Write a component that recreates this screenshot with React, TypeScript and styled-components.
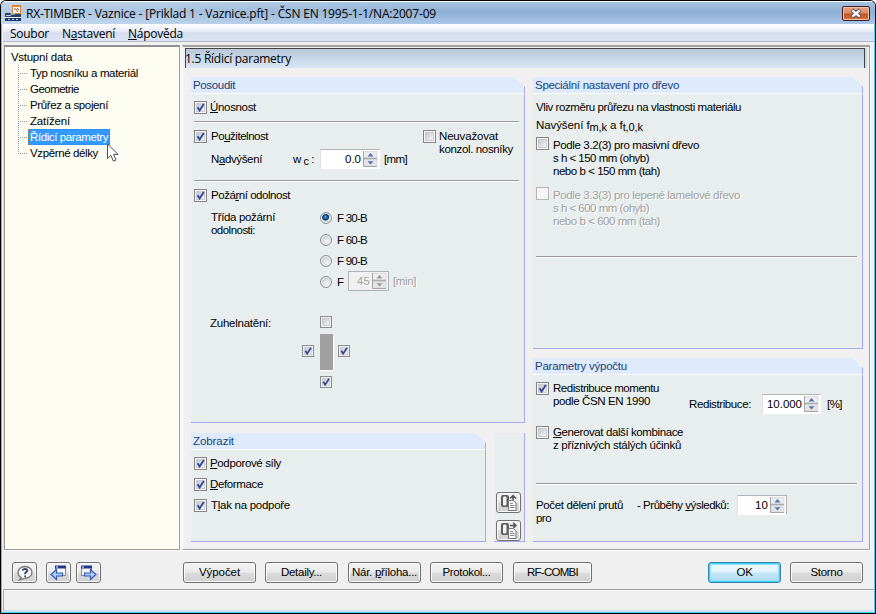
import React, { useLayoutEffect, useRef, useState } from "react";
import styled, { createGlobalStyle, css } from "styled-components";

const GlobalStyle = createGlobalStyle`
  *, *::before, *::after { box-sizing: border-box; }
  body { margin: 0; background: #fff; overflow: hidden; }
  u { text-decoration: underline; text-underline-offset: 1px; text-decoration-thickness: 1px; }
`;

/* ---------- Text ---------- */

const TextRun = styled.span<{ $muted?: boolean; $font: "dialog" | "caption" | "header" }>`
  display: block;
  width: max-content;
  white-space: pre;
  height: 13px;
  color: #000;
  ${({ $font }) =>
    $font === "dialog"
      ? css`font: 11.5px/13px "Liberation Sans", Arial, sans-serif;`
      : $font === "header"
      ? css`font: 11.5px/13px "Liberation Sans", Arial, sans-serif; color: #17427c;`
      : css`font: 12px/13px "Open Sans", "Noto Sans", sans-serif;`}
  ${({ $muted }) => $muted && css`color: #a0a0a0; text-shadow: 1px 1px 0 #fff;`}
`;

type TextProps = {
  w: number;
  children: React.ReactNode;
  muted?: boolean;
  font?: "dialog" | "caption" | "header";
};

/** A single line of text whose tracking is adjusted to fill the given width. */
function Text({ w, children, muted, font = "dialog" }: TextProps) {
  const ref = useRef<HTMLSpanElement>(null);
  const [tracking, setTracking] = useState(0);
  useLayoutEffect(() => {
    const el = ref.current;
    if (!el) return;
    el.style.letterSpacing = "0px";
    const count = (el.textContent || "").length;
    setTracking((w + 1 - el.getBoundingClientRect().width) / count);
    el.style.letterSpacing = "";
  }, [w]);
  return (
    <TextRun ref={ref} $muted={muted} $font={font} style={{ letterSpacing: `${tracking}px` }}>
      {children}
    </TextRun>
  );
}

/* ---------- Window frame ---------- */

const Window = styled.div`
  width: 876px;
  height: 614px;
  display: flex;
  flex-direction: column;
  background: #f0f0f0;
  border: 1px solid #000;
  border-right-color: #101418;
  border-radius: 6px 6px 0 0;
  overflow: hidden;
  box-shadow: inset 0 0 0 1px #3fd2f5;
  padding: 0 1px 1px 2px;
`;

const TitleBar = styled.header`
  height: 23px;
  margin: 0 -1px 0 -2px;
  padding: 1px 5px 0 4px;
  display: flex;
  align-items: center;
  border-top: 1px solid #fff;
  background: linear-gradient(to right, rgba(255,255,255,.35), rgba(255,255,255,0) 50%),
    linear-gradient(#a5c2e0, #8fb0d5 45%, #a9c6e6);
`;

const AppIcon = styled.svg`
  width: 17px;
  height: 17px;
  margin-right: 4px;
  flex: none;
`;

const CloseButton = styled.button`
  width: 28px;
  height: 15px;
  margin: 0 0 0 auto;
  padding: 0;
  border: 1px solid #43192d;
  border-radius: 2px;
  box-shadow: inset 0 0 0 1px #f1c3ac;
  background: linear-gradient(#e6a483, #dc8a62 48%, #c35218 52%, #d6753e);
  display: grid;
  place-items: center;
`;

const MenuBar = styled.nav`
  height: 18px;
  display: flex;
  padding: 3px 0 0 7px;
  border-bottom: 1px solid #b5bacb;
  background: linear-gradient(#fff, #e9edf8 40%, #d7def0 55%, #dce3f4);
`;

const MenuItem = styled.div<{ $gap: number }>`
  margin-right: ${({ $gap }) => $gap}px;
`;

const Workspace = styled.main`
  display: flex;
  height: 508px;
  padding-top: 3px;
  background: #f0f0f0;
  border-left: 1px solid #d5def0;
`;

/* ---------- Navigation tree ---------- */

const Tree = styled.aside`
  width: 176px;
  height: 505px;
  margin-right: 2px;
  padding: 4px 0 0 1px;
  background: #fdfdf3;
  border: 1px solid #999;
  border-top: 2px solid #909090;
  box-shadow: 0 1px 0 #fff, 1px 0 0 #fff;
`;

const TreeRoot = styled.div`
  height: 16px;
  padding-left: 5px;
`;

const TreeRow = styled.div`
  height: 16px;
  display: flex;
  padding-left: 12px;
`;

const Branch = styled.span<{ $last?: boolean }>`
  width: 9px;
  height: 16px;
  margin: -2px 2px 0 0;
  background:
    repeating-linear-gradient(to bottom, #999 0 1px, transparent 1px 2px) 0 0 / 1px ${({ $last }) => ($last ? "8px" : "16px")} no-repeat,
    repeating-linear-gradient(to right, #999 0 1px, transparent 1px 2px) 0 8px / 9px 1px no-repeat;
`;

const TreeLabel = styled.div<{ $selected?: boolean }>`
  position: relative;
  height: 16px;
  padding: 1px 1px 0 1px;
  border: 1px solid transparent;
  margin: -2px 0 0 -1px;
  ${({ $selected }) =>
    $selected &&
    css`
      background: #3399ff;
      border: 1px dotted #c46a15;
      span { color: #fff; }
    `}
`;

const Cursor = styled.svg`
  position: absolute;
  left: 77px;
  top: 13px;
  width: 14px;
  height: 20px;
`;

/* ---------- Content panels ---------- */

const Content = styled.section`
  width: 688px;
  height: 505px;
  padding: 1px 0 0 1px;
  border-top: 2px solid #a0a0a0;
  border-right: 1px solid #a0a0a0;
  border-bottom: 1px solid #a0a0a0;
  border-left: 1px solid #fff;
  box-shadow: 0 1px 0 #fff, 1px 0 0 #fff;
`;

const PageTitle = styled.div`
  height: 20px;
  width: 680px;
  margin-left: 1px;
  padding-top: 3px;
  border: 1px solid #444;
  border-bottom: 0;
  background: linear-gradient(#b9c9da, #c6d5e5 45%, #d9e6f4);
  box-shadow: 2px 0 0 #c9d8e8;
`;

const TitleText = styled.div`
  margin-left: -1px;
`;

const Panels = styled.div`
  display: grid;
  grid-template-columns: 334px 330px;
  column-gap: 8px;
  padding: 9px 0 0 7px;
`;

const Column = styled.div`
  display: flex;
  flex-direction: column;
`;

const GroupBox = styled.section<{ $h: number; $w: number }>`
  width: ${({ $w }) => $w}px;
  height: ${({ $h }) => $h}px;
  display: flex;
  flex-direction: column;
`;

const GroupHeader = styled.div`
  height: 17px;
  flex: none;
  padding: 2px 0 0 2px;
  background: #dfeafc;
  border-bottom: 1px solid #fff;
  border-right: 1px solid #a8a8ec;
  clip-path: polygon(0 0, calc(100% - 11px) 0, 100% 10px, 100% 100%, 0 100%);
`;

const GroupBody = styled.div`
  flex: 1;
  background: #e8eeee;
  border-right: 1px solid #a8a8ec;
  border-bottom: 1px solid #a8a8ec;
  padding: 7px 5px 0 3px;
`;

function Group({ title, titleWidth, w, h, children }: { title: string; titleWidth: number; w: number; h: number; children: React.ReactNode }) {
  return (
    <GroupBox $w={w} $h={h}>
      <GroupHeader>
        <Text font="header" w={titleWidth}>{title}</Text>
      </GroupHeader>
      <GroupBody>{children}</GroupBody>
    </GroupBox>
  );
}

const Separator = styled.hr<{ $top: number }>`
  margin: ${({ $top }) => $top}px 0 0 0;
  height: 2px;
  border: 0;
  border-top: 1px solid #9a9a9a;
  border-bottom: 1px solid #fff;
`;

const Row = styled.div<{ $top?: number; $left?: number; $h?: number }>`
  display: flex;
  height: ${({ $h = 13 }) => $h}px;
  margin-top: ${({ $top = 0 }) => $top}px;
  margin-left: ${({ $left = 0 }) => $left}px;
`;

const Cell = styled.div<{ $w?: number; $top?: number }>`
  flex: none;
  width: ${({ $w }) => ($w ? `${$w}px` : "auto")};
  padding-top: ${({ $top = 0 }) => $top}px;
`;

const Lines = styled.div<{ $top?: number }>`
  display: flex;
  flex-direction: column;
  align-items: flex-start;
  padding-top: ${({ $top = 0 }) => $top}px;
`;

/* ---------- Controls ---------- */

const Box = styled.svg<{ $small?: boolean; $gap?: number }>`
  flex: none;
  display: block;
  width: ${({ $small }) => ($small ? 12 : 13)}px;
  height: ${({ $small }) => ($small ? 12 : 13)}px;
  margin-right: ${({ $gap = 3 }) => $gap}px;
`;

function Check({ on, small, disabled, gap }: { on?: boolean; small?: boolean; disabled?: boolean; gap?: number }) {
  return (
    <Box viewBox="0 0 13 13" $small={small} $gap={gap}>
      <defs>
        <linearGradient id="well" x1="0" y1="0" x2="1" y2="1">
          <stop offset="0" stopColor="#bfc4ca" />
          <stop offset="1" stopColor="#f8f8f8" />
        </linearGradient>
      </defs>
      <rect x=".5" y=".5" width="12" height="12" fill="#f5f5f5" stroke={disabled ? "#b5b5b5" : "#868686"} />
      {!disabled && <rect x="2.5" y="2.5" width="8" height="8" fill="url(#well)" stroke="#c9ced3" />}
      {on && <path d="M3.6 6.2 5.6 9.4 9.8 3" fill="none" stroke="#32479a" strokeWidth="1.9" />}
    </Box>
  );
}

const RadioDot = styled.span<{ $on?: boolean }>`
  flex: none;
  width: 12px;
  height: 12px;
  margin-right: 5px;
  border: 1px solid #8b8f92;
  border-radius: 50%;
  box-shadow: inset 0 0 0 1px #f6f6f6;
  background: ${({ $on }) =>
    $on
      ? "radial-gradient(circle at 45% 40%, #48b4ee 0, #1767a8 1.6px, #0e2f5b 3px, #d5dade 4px)"
      : "radial-gradient(circle at 60% 65%, #f7f7f7, #cfd2d4 5px)"};
`;

const SpinFrame = styled.div<{ $w: number; $disabled?: boolean; $framed?: boolean }>`
  flex: none;
  display: flex;
  justify-content: flex-end;
  width: ${({ $w }) => $w}px;
  height: 20px;
  padding: 0 1px 0 0;
  background: ${({ $disabled }) => ($disabled ? "#f0f0f0" : "#fff")};
  border: 1px solid ${({ $disabled }) => ($disabled ? "#adb2b5" : "#fff")};
  border-top-color: ${({ $disabled }) => ($disabled ? "#adb2b5" : "#aeb4bb")};
  border-left-color: ${({ $disabled }) => ($disabled ? "#adb2b5" : "#dde2e6")};
  border-right-color: ${({ $framed, $disabled }) => ($framed || $disabled ? "#adb2b5" : "#fff")};
`;

const SpinValue = styled.div`
  padding-top: 3px;
`;

const SpinArrows = styled.svg`
  width: 15px;
  height: 16px;
  margin: 1px 0 0 2px;
  flex: none;
`;

function Spinner({ w, value, valueWidth, disabled, framed }: { w: number; value: string; valueWidth: number; disabled?: boolean; framed?: boolean }) {
  const arrow = disabled ? "#9a9a9a" : "#5272b6";
  return (
    <SpinFrame $w={w} $disabled={disabled} $framed={framed}>
      <SpinValue><Text w={valueWidth} muted={disabled}>{value}</Text></SpinValue>
      <SpinArrows viewBox="0 0 15 16">
        <rect x=".5" y=".5" width="13.5" height="6.5" fill="#ececec" stroke="#dedede" />
        <rect x=".5" y="8.5" width="13.5" height="6.5" fill="#e4e4e4" stroke="#dedede" />
        <path d="M.5 0v15.5H14" fill="none" stroke="#a5a5a5" />
        <path d="M1 7.5h13" stroke="#a8acb0" strokeWidth="1.4" />
        <path d="M4.5 5.4h6L7.5 2z" fill={arrow} />
        <path d="M4.5 10.2h6l-3 3.2z" fill={arrow} />
      </SpinArrows>
    </SpinFrame>
  );
}

const CharringGrid = styled.div`
  display: grid;
  grid-template-columns: 12px 12px 12px;
  column-gap: 6px;
  grid-template-rows: 12px 36px 12px;
  row-gap: 6px;
  align-items: start;
`;

const Slot = styled.div<{ $col: number; $row: number; $side?: boolean }>`
  grid-column: ${({ $col }) => $col};
  grid-row: ${({ $row }) => $row};
  padding-top: ${({ $side }) => ($side ? 11 : 0)}px;
`;

const Beam = styled.div`
  grid-column: 2;
  grid-row: 2;
  width: 14px;
  height: 37px;
  background: #a0a0a0;
  border-right: 1px solid #fff;
  border-bottom: 1px solid #fff;
`;

const Sub = styled.span`
  font-size: 11px;
  line-height: 9px;
  position: relative;
  top: 2px;
`;

const LowerRow = styled.div`
  display: flex;
  justify-content: space-between;
  margin-top: 10px;
`;

const ToolStrip = styled.div`
  width: 31px;
  height: 109px;
  display: flex;
  flex-direction: column;
  justify-content: flex-end;
  gap: 7px;
  padding: 0 3px 0 2px;
  background: #e8eeee;
  border-right: 1px solid #a8a8ec;
  border-bottom: 1px solid #a8a8ec;
`;

const Button = styled.button<{ $w: number; $gap?: number; $primary?: boolean }>`
  flex: none;
  width: ${({ $w }) => $w}px;
  height: 21px;
  margin: 0 ${({ $gap = 0 }) => $gap}px 0 0;
  padding: 0;
  display: flex;
  align-items: center;
  justify-content: center;
  border: 1px solid #707070;
  border-radius: 3px;
  box-shadow: inset 0 0 0 1px #fcfcfc;
  background: linear-gradient(#f3f3f3, #ebebeb 48%, #dcdcdc 52%, #cfcfcf);
  ${({ $primary }) =>
    $primary &&
    css`
      border-color: #3c7fb1;
      box-shadow: inset 0 0 0 1px #3bd4fa, inset 0 0 0 2px #8fe4fb;
      background: linear-gradient(#f0f8fd, #e2f3fc 48%, #c4e5f6 52%, #b2dcf3);
    `}
`;

const ButtonIcon = styled.svg`
  width: 20px;
  height: 18px;
  flex: none;
`;

const Footer = styled.footer`
  display: flex;
  height: 40px;
  padding: 11px 0 0 9px;
  border-top: 1px solid #fff;
  border-bottom: 1px solid #a0a0a0;
`;

const StatusBar = styled.div`
  flex: 1;
  background: #f0f0f0;
  border-top: 1px solid #f8f8f8;
  border-left: 1px solid #a9a9a9;
  border-bottom: 2px solid #c9dff5;
  margin-right: 1px;
`;

const Spacer = styled.div`
  flex: 1;
`;

function DocumentButton({ up }: { up?: boolean }) {
  return (
    <Button $w={25}>
      <ButtonIcon viewBox="0 0 20 18">
        <rect x="2" y="1" width="8" height="12" rx="2" fill="#5c5c5c" />
        <rect x="4" y="2.500" width="3.500" height="9" rx="1" fill="#f2f2f2" />
        <path d={up ? "M11 4.500l3-3 3 3M14 2v4" : "M11 3.500h4M15 1.500v4l2-2z"} fill="none" stroke="#555" strokeWidth="1.500" />
        <path d="M9.500 6.500h5l2.500 2.500v7.500h-7.500z" fill="#fafafa" stroke="#777" />
        <path d="M11 9.500h3M11 11.500h4.500M11 13.500h4.500" stroke="#888" />
      </ButtonIcon>
    </Button>
  );
}

function PageButton({ forward, gap }: { forward?: boolean; gap: number }) {
  return (
    <Button $w={25} $gap={gap}>
      <ButtonIcon viewBox="0 0 20 18">
        <rect x={forward ? 2.5 : 6.5} y="2.500" width="10" height="9" fill="#f6f6f6" stroke="#888" />
        <path d={forward ? "M2 3h11" : "M6 3h11"} stroke="#20368c" strokeWidth="3" />
        <path d={forward ? "M3 3h2" : "M7 3h2"} stroke="#fff" />
        <path
          d={forward ? "M5.500 9h6v-3.500l5.500 5-5.500 5v-3.500h-6z" : "M13.500 9h-6v-3.500l-5.500 5 5.500 5v-3.500h6z"}
          fill="#a9cdfb"
          stroke="#2f55b0"
          strokeWidth="1.100"
        />
      </ButtonIcon>
    </Button>
  );
}

export default function App() {
  return (
    <>
      <GlobalStyle />
      <Window>
        <TitleBar>
          <AppIcon viewBox="0 0 17 17">
            <rect x="7" y="0" width="9" height="9" fill="#e28434" />
            <rect x="8" y="2" width="7" height="6" fill="#fff" />
            <path d="M9 4h2l2 3M12 3l2 2" stroke="#8c532f" fill="none" />
            <rect x="0" y="8" width="6" height="2" fill="#26436f" />
            <rect x="0" y="9" width="16" height="3" fill="#26436f" />
            <rect x="0" y="12" width="16" height="1" fill="#fff" />
            <rect x="0" y="13" width="16" height="3" fill="#18366a" />
            <path d="M1 10.500h4l2-1.500h3M3 14.500h2M7 14.500h2M11 14.500h2" stroke="#c8d4e4" fill="none" />
          </AppIcon>
          <Text font="caption" w={409}>RX-TIMBER - Vaznice - [Priklad 1 - Vaznice.pft] - ČSN EN 1995-1-1/NA:2007-09</Text>
          <CloseButton>
            <svg width="14" height="11" viewBox="0 0 14 11">
              <path d="M3 2l8 7M11 2l-8 7" stroke="#4a4a60" strokeWidth="4" />
              <path d="M3.300 2.300l7.400 6.400M10.700 2.300l-7.400 6.400" stroke="#fff" strokeWidth="2.300" />
            </svg>
          </CloseButton>
        </TitleBar>
        <MenuBar>
          <MenuItem $gap={13}><Text font="caption" w={38}>Soubor</Text></MenuItem>
          <MenuItem $gap={13}><Text font="caption" w={52}>N<u>a</u>stavení</Text></MenuItem>
          <MenuItem $gap={0}><Text font="caption" w={54}><u>N</u>ápověda</Text></MenuItem>
        </MenuBar>

        <Workspace>
          <Tree>
            <TreeRoot><Text w={60}>Vstupní data</Text></TreeRoot>
            <TreeRow><Branch /><TreeLabel><Text w={107}>Typ nosníku a materiál</Text></TreeLabel></TreeRow>
            <TreeRow><Branch /><TreeLabel><Text w={48}>Geometrie</Text></TreeLabel></TreeRow>
            <TreeRow><Branch /><TreeLabel><Text w={77}>Průřez a spojení</Text></TreeLabel></TreeRow>
            <TreeRow><Branch /><TreeLabel><Text w={39}>Zatížení</Text></TreeLabel></TreeRow>
            <TreeRow>
              <Branch />
              <TreeLabel $selected>
                <Text w={77}>Řídicí parametry</Text>
                <Cursor viewBox="0 0 14 20">
                  <path d="M1.500 1v14.500l3.400-3.200 2.500 5.800 2.600-1.100-2.500-5.600h4.600z" fill="#fff" stroke="#4a4f58" />
                </Cursor>
              </TreeLabel>
            </TreeRow>
            <TreeRow><Branch $last /><TreeLabel><Text w={67}>Vzpěrné délky</Text></TreeLabel></TreeRow>
          </Tree>

          <Content>
            <PageTitle><TitleText><Text font="caption" w={105}>1.5 Řídicí parametry</Text></TitleText></PageTitle>
            <Panels>
              <Column>
                <Group title="Posoudit" titleWidth={41} w={334} h={346}>
                  <Row><Check on /><Text w={45}><u>Ú</u>nosnost</Text></Row>
                  <Separator $top={7} />
                  <Row $top={7} $h={50}>
                    <Cell $w={229}>
                      <Row><Check on gap={4} /><Text w={56}>Po<u>u</u>žitelnost</Text></Row>
                      <Row $top={6} $left={17} $h={20}>
                        <Cell $w={82} $top={4}><Text w={50}>N<u>a</u>dvýšení</Text></Cell>
                        <Cell $w={27} $top={4}><Text w={20}>w<Sub> c</Sub> :</Text></Cell>
                        <Spinner w={60} value="0.0" valueWidth={15} />
                        <Cell $top={4}><Row $left={4}><Text w={22}>[mm]</Text></Row></Cell>
                      </Row>
                    </Cell>
                    <Check />
                    <Lines><Text w={58}>Neuvažovat</Text><Text w={73}>konzol. nosníky</Text></Lines>
                  </Row>
                  <Separator $top={0} />
                  <Row $top={7}><Check on gap={4} /><Text w={78}>Požá<u>r</u>ní odolnost</Text></Row>
                  <Row $top={9} $left={17} $h={96}>
                    <Cell $w={109}>
                      <Lines><Text w={63}>Třída požární</Text><Text w={43}>odolnosti:</Text></Lines>
                    </Cell>
                    <Lines>
                      <Row $top={1} $h={21}><RadioDot $on /><Text w={29}>F 30-B</Text></Row>
                      <Row $top={1} $h={21}><RadioDot /><Text w={29}>F 60-B</Text></Row>
                      <Row $h={16}><RadioDot /><Text w={29}>F 90-B</Text></Row>
                      <Row $h={20}>
                        <Cell $w={28} $top={5}><Row><RadioDot /><Text w={5}>F</Text></Row></Cell>
                        <Spinner w={41} value="45" valueWidth={12} disabled />
                        <Cell $top={4}><Row $left={4}><Text w={22} muted>[min]</Text></Row></Cell>
                      </Row>
                    </Lines>
                  </Row>
                  <Row $top={9} $left={16} $h={75}>
                    <Cell $w={92} $top={1}><Text w={60}>Zuhelnatění:</Text></Cell>
                    <CharringGrid>
                      <Slot $col={2} $row={1}><Check small gap={0} /></Slot>
                      <Slot $col={1} $row={2} $side><Check on small gap={0} /></Slot>
                      <Beam />
                      <Slot $col={3} $row={2} $side><Check on small gap={0} /></Slot>
                      <Slot $col={2} $row={3}><Check on small gap={0} /></Slot>
                    </CharringGrid>
                  </Row>
                </Group>
                <LowerRow>
                  <Group title="Zobrazit" titleWidth={40} w={295} h={109}>
                    <Row><Check on /><Text w={70}><u>P</u>odporové síly</Text></Row>
                    <Row $top={8}><Check on /><Text w={52}><u>D</u>eformace</Text></Row>
                    <Row $top={8}><Check on gap={4} /><Text w={78}>T<u>l</u>ak na podpoře</Text></Row>
                  </Group>
                  <ToolStrip>
                    <DocumentButton up />
                    <DocumentButton />
                  </ToolStrip>
                </LowerRow>
              </Column>

              <Column>
                <Group title="Speciální nastavení pro dřevo" titleWidth={143} w={330} h={272}>
                  <Row><Text w={204}>Vliv rozměru průřezu na vlastnosti materiálu</Text></Row>
                  <Row $top={5}><Text w={106}>Navýšení f<Sub>m,k</Sub> a f<Sub>t,0,k</Sub></Text></Row>
                  <Row $top={5} $h={50}>
                    <Check gap={4} />
                    <Lines $top={2}>
                      <Text w={145}>Podle 3.2(3) pro masivní dřevo</Text>
                      <Text w={95}>s h &lt; 150 mm (ohyb)</Text>
                      <Text w={106}>nebo b &lt; 150 mm (tah)</Text>
                    </Lines>
                  </Row>
                  <Row $h={69}>
                    <Check disabled gap={4} />
                    <Lines $top={2}>
                      <Text w={186} muted>Podle 3.3(3) pro lepené lamelové dřevo</Text>
                      <Text w={95} muted>s h &lt; 600 mm (ohyb)</Text>
                      <Text w={106} muted>nebo b &lt; 600 mm (tah)</Text>
                    </Lines>
                  </Row>
                  <Separator $top={0} />
                </Group>
                <Row $h={9} />
                <Group title="Parametry výpočtu" titleWidth={91} w={330} h={184}>
                  <Row $h={44}>
                    <Check on gap={4} />
                    <Cell $w={136}>
                      <Lines><Text w={105}>Redistribuce momentu</Text><Text w={96}>podle ČSN EN 1990</Text></Lines>
                    </Cell>
                    <Cell $w={73} $top={16}><Text w={61}>Redistribuce:</Text></Cell>
                    <Cell $top={12}><Spinner w={59} value="10.000" valueWidth={34} /></Cell>
                    <Cell $top={16}><Row $left={6}><Text w={14}>[%]</Text></Row></Cell>
                  </Row>
                  <Row $h={57}>
                    <Check gap={4} />
                    <Lines><Text w={129}><u>G</u>enerovat další kombinace</Text><Text w={127}>z příznivých stálých účinků</Text></Lines>
                  </Row>
                  <Separator $top={0} />
                  <Row $top={10} $h={30}>
                    <Cell $w={101} $top={4}><Lines><Text w={86}>Počet dělení prutů</Text><Text w={14}>pro</Text></Lines></Cell>
                    <Cell $w={100} $top={4}><Text w={91}>- Průběhy <u>v</u>ýsledků:</Text></Cell>
                    <Spinner w={50} value="10" valueWidth={12} framed />
                  </Row>
                </Group>
              </Column>
            </Panels>
          </Content>
        </Workspace>

        <Footer>
          <Button $w={25} $gap={9}>
            <ButtonIcon viewBox="0 0 20 18">
              <path d="M10 2.500c-4 0-7 2.600-7 6 0 2.200 1.200 4 3.200 5l-1.700 2.500 4.500-1.700c4.500.2 8-2.300 8-5.800 0-3.400-3-6-7-6z" fill="#f6f6f6" stroke="#777" strokeWidth="1.300" />
              <path d="M7.500 6.500c.3-1.800 4.800-2.200 4.800 0 0 1.600-2.300 1.600-2.300 3.700M9.300 12.300h1.600" fill="none" stroke="#34446c" strokeWidth="1.800" />
            </ButtonIcon>
          </Button>
          <PageButton gap={5} />
          <PageButton forward gap={82} />
          <Button $w={73} $gap={9}><Text w={40}>Výpočet</Text></Button>
          <Button $w={73} $gap={10}><Text w={40}>Detaily...</Text></Button>
          <Button $w={73} $gap={9}><Text w={64}>Nár. <u>p</u>říloha...</Text></Button>
          <Button $w={73} $gap={10}><Text w={47}>Protokol...</Text></Button>
          <Button $w={79}><Text w={50}>RF-COMBI</Text></Button>
          <Spacer />
          <Button $w={73} $gap={9} $primary><Text w={15}>OK</Text></Button>
          <Button $w={73} $gap={11}><Text w={31}>Storno</Text></Button>
        </Footer>
        <StatusBar />
      </Window>
    </>
  );
}
